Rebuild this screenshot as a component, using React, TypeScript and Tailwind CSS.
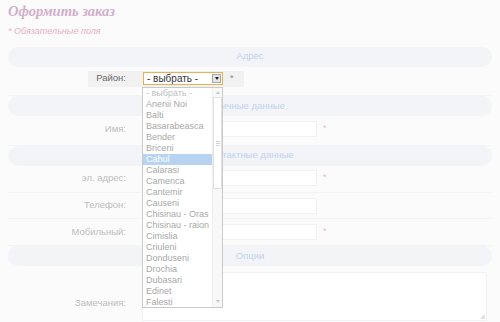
const districts = [
  "- выбрать -",
  "Anenii Noi",
  "Balti",
  "Basarabeasca",
  "Bender",
  "Briceni",
  "Cahul",
  "Calarasi",
  "Camenca",
  "Cantemir",
  "Causeni",
  "Chisinau - Oras",
  "Chisinau - raion",
  "Cimislia",
  "Criuleni",
  "Donduseni",
  "Drochia",
  "Dubasari",
  "Edinet",
  "Falesti",
];

const SectionBar = ({ title, h }: { title: string; h: string }) => (
  <div className={`${h} flex items-center`}>
    <div className="w-full h-[20px] rounded-full bg-[#f2f4f8] flex items-center justify-center text-[9.5px] text-[#c2d3ee]">
      {title}
    </div>
  </div>
);

const Field = ({
  label,
  h,
  pb,
  required,
}: {
  label: string;
  h: string;
  pb: string;
  required?: boolean;
}) => (
  <div className={`${h} ${pb} flex items-center border-b border-[#f4f4f5]`}>
    <div className="w-[118px] text-right text-[9.5px] text-[#bdbdbd]">{label}</div>
    <div className="ml-[17px] w-[174px] h-[16px] bg-white border border-[#f1f1f3]"></div>
    {required && <span className="ml-[6px] text-[9px] text-[#f2bccb]">*</span>}
  </div>
);

const App: React.FC = () => {
  return (
    <div
      className="relative w-[500px] h-[322px] overflow-hidden bg-[#fbfbfc] px-[8px]"
      style={{ fontFamily: '"Liberation Sans", Arial, sans-serif' }}
    >
      <h1
        className="pt-[1px] h-[20px] text-[14.5px] font-bold italic text-[#d3aecb]"
        style={{ fontFamily: '"Liberation Serif", serif' }}
      >
        Оформить заказ
      </h1>
      <p className="mt-[5px] h-[21px] text-[9px] italic text-[#e9afc3]">* Обязательные поля</p>

      <SectionBar title="Адрес" h="h-[21px]" />

      <div className="h-[29px] pb-[5px] flex items-center border-b border-[#f4f4f5]">
        <div className="ml-[80px] h-[16px] flex items-center bg-[#f1f1f1] pr-[10px]">
          <div className="w-[38px] text-right text-[9.5px] text-[#6a6a6a]">Район:</div>
          <div className="ml-[17px] w-[80px] h-[13px] bg-white border border-[#e2b352] flex items-center justify-between pl-[3px] pr-[1px]">
            <span className="text-[10px] leading-none text-[#333]">- выбрать -</span>
            <span className="w-[9px] h-[9px] bg-[#e4e4e4] border border-[#a8a8a8] flex items-center justify-center">
              <span className="block w-0 h-0 border-l-[2.5px] border-r-[2.5px] border-t-[3px] border-l-transparent border-r-transparent border-t-[#222]"></span>
            </span>
          </div>
          <span className="ml-[7px] text-[9px] text-[#888]">*</span>
        </div>
      </div>

      <SectionBar title="Личные данные" h="h-[20px]" />
      <Field label="Имя:" h="h-[30px]" pb="pb-[3px]" required />

      <SectionBar title="Контактные данные" h="h-[19px]" />
      <Field label="эл. адрес:" h="h-[28px]" pb="pb-[1px]" required />
      <Field label="Телефон:" h="h-[26px]" pb="pb-0" />
      <Field label="Мобильный:" h="h-[27px]" pb="pb-0" required />

      <SectionBar title="Опции" h="h-[20px]" />

      <div className="flex items-start pt-[6px]">
        <div className="w-[118px] pt-[24px] text-right text-[9.5px] text-[#bdbdbd]">Замечания:</div>
        <div className="relative ml-[16px] w-[345px] h-[49px] bg-white border border-[#f1f1f3]">
          <span className="absolute right-[1px] bottom-[1px] text-[6px] leading-none text-[#dcdcdc]">◢</span>
        </div>
      </div>

      {/* open district list */}
      <div className="absolute left-[142px] top-[87px] w-[81px] h-[221px] bg-white border border-[#cacaca] flex">
        <ul className="flex-1 text-[9px] text-[#a8a8a8]">
          {districts.map((d, i) => (
            <li
              key={d}
              className={`h-[11px] leading-[11px] pl-[3px] whitespace-nowrap ${
                d === "Cahul" ? "bg-[#b8d3f2] text-white" : i === 0 ? "text-[#c0c0c0]" : ""
              }`}
            >
              {d}
            </li>
          ))}
        </ul>
        <div className="w-[10px] bg-[#f8f8f8] border-l border-[#eeeeee] flex flex-col items-center">
          <span className="mt-[3px] block w-0 h-0 border-l-[2px] border-r-[2px] border-b-[3px] border-l-transparent border-r-transparent border-b-[#c8c8c8]"></span>
          <div className="mt-[3px] w-[9px] h-[92px] bg-white border border-[#e0e0e0] flex flex-col items-center justify-center gap-[1px]">
            <span className="block w-[4px] h-px bg-[#d2d2d2]"></span>
            <span className="block w-[4px] h-px bg-[#d2d2d2]"></span>
            <span className="block w-[4px] h-px bg-[#d2d2d2]"></span>
          </div>
          <div className="flex-1"></div>
          <span className="mb-[4px] block w-0 h-0 border-l-[2px] border-r-[2px] border-t-[3px] border-l-transparent border-r-transparent border-t-[#c8c8c8]"></span>
        </div>
      </div>
    </div>
  );
};

export default App;
